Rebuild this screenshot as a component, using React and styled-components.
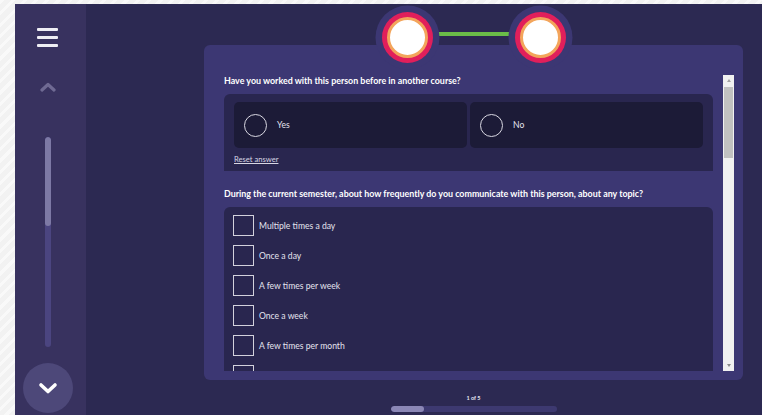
import React from "react";
import styled, { createGlobalStyle } from "styled-components";

const frequencies = [
  "Multiple times a day",
  "Once a day",
  "A few times per week",
  "Once a week",
  "A few times per month",
  "Once a month",
];

const GlobalStyle = createGlobalStyle`
  html, body {
    margin: 0;
    padding: 0;
    height: 100%;
  }
  body {
    background-color: #f2f2f2;
    background-image: repeating-linear-gradient(
      -45deg,
      #f2f2f2 0px,
      #f2f2f2 5px,
      #f9f9f9 5px,
      #f9f9f9 8px
    );
    font-family: Lato, "Open Sans", sans-serif;
    overflow: hidden;
  }
  #root {
    padding: 4px 0 0 15px;
  }
`;

export default function App() {
  return (
    <>
      <GlobalStyle />
      <Shell>
        <Sidebar>
          <Hamburger>
            <span />
            <span />
            <span />
          </Hamburger>
          <ChevronIcon width="16" height="10" viewBox="0 0 16 10">
            <path d="M2 8 L8 2.5 L14 8" />
          </ChevronIcon>
          <Track>
            <TrackThumb />
          </Track>
          <DownButton>
            <svg width="20" height="12" viewBox="0 0 20 12">
              <path
                d="M3 3 L10 9.5 L17 3"
                fill="none"
                stroke="#fff"
                strokeWidth="3.6"
                strokeLinecap="round"
                strokeLinejoin="round"
              />
            </svg>
          </DownButton>
        </Sidebar>

        <Main>
          <Card>
            <Stepper>
              <Step />
              <Link />
              <Step />
            </Stepper>

            <ScrollArea>
              <Questions>
                <Question>
                  Have you worked with this person before in another course?
                </Question>
                <RadioGroup>
                  <Options>
                    <Option>
                      <Radio />
                      Yes
                    </Option>
                    <Option>
                      <Radio />
                      No
                    </Option>
                  </Options>
                  <Reset>Reset answer</Reset>
                </RadioGroup>

                <Question $gap>
                  During the current semester, about how frequently do you
                  communicate with this person, about any topic?
                </Question>
                <CheckGroup>
                  {frequencies.map((f) => (
                    <CheckRow key={f}>
                      <Check />
                      {f}
                    </CheckRow>
                  ))}
                </CheckGroup>
              </Questions>

              <Scrollbar>
                <ScrollButton>
                  <Arrow />
                </ScrollButton>
                <ScrollTrack>
                  <ScrollThumb />
                </ScrollTrack>
                <ScrollButton>
                  <Arrow $down />
                </ScrollButton>
              </Scrollbar>
            </ScrollArea>
          </Card>

          <Pager>
            <PageLabel>1 of 5</PageLabel>
            <Progress>
              <ProgressFill style={{ width: `${(1 / 5) * 100}%` }} />
            </Progress>
          </Pager>
        </Main>
      </Shell>
    </>
  );
}

const Shell = styled.div`
  display: flex;
  height: 411px;
  background: #2c2952;
`;

const Sidebar = styled.aside`
  width: 65px;
  padding-right: 6px;
  background: #38325f;
  display: flex;
  flex-direction: column;
  align-items: center;
`;

const Hamburger = styled.div`
  margin-top: 24px;
  width: 21px;
  display: flex;
  flex-direction: column;
  gap: 5px;

  span {
    display: block;
    height: 3px;
    border-radius: 1px;
    background: #eeeef4;
  }
`;

const ChevronIcon = styled.svg`
  margin-top: 35px;
  fill: none;
  stroke: #6f6a93;
  stroke-width: 3.2;
  stroke-linecap: round;
  stroke-linejoin: round;
`;

const Track = styled.div`
  margin-top: 45px;
  width: 6px;
  height: 210px;
  border-radius: 3px;
  background: #4b4580;
  overflow: hidden;
`;

const TrackThumb = styled.div`
  height: 89px;
  border-radius: 3px;
  background: #7d79a5;
`;

const DownButton = styled.div`
  margin-top: auto;
  margin-bottom: 2px;
  width: 50px;
  height: 50px;
  border-radius: 50%;
  background: #4d4879;
  display: flex;
  align-items: center;
  justify-content: center;
`;

const Main = styled.main`
  flex: 1;
  padding: 41px 19px 0 118px;
  display: flex;
  flex-direction: column;
`;

const Card = styled.section`
  position: relative;
  height: 335px;
  box-sizing: border-box;
  padding: 30px 9px 9px 20px;
  border-radius: 6px;
  background: #3c3773;
  display: flex;
`;

const Stepper = styled.div`
  position: absolute;
  top: -33px;
  left: 0;
  right: 0;
  display: flex;
  justify-content: center;
  align-items: flex-start;
`;

const Step = styled.div`
  width: 51px;
  height: 51px;
  border-radius: 50%;
  background: #e11f5b;
  box-shadow: 0 0 0 6.5px #3c3773;
  display: flex;
  align-items: center;
  justify-content: center;
  position: relative;
  z-index: 1;

  &::after {
    content: "";
    width: 35px;
    height: 35px;
    border-radius: 50%;
    background: #fff;
    border: 3px solid #f3a55b;
  }
`;

const Link = styled.div`
  width: 82px;
  height: 4px;
  margin-top: 20px;
  background: #6abd48;
`;

const ScrollArea = styled.div`
  flex: 1;
  display: flex;
  gap: 10px;
  overflow: hidden;
`;

const Questions = styled.div`
  flex: 1;
  overflow: hidden;
`;

const Question = styled.p`
  margin: ${(p) => (p.$gap ? "17px" : "0")} 0 7px;
  font-size: 8.9px;
  line-height: 12px;
  font-weight: 700;
  color: #ffffff;
  white-space: nowrap;
`;

const RadioGroup = styled.div`
  background: #29264f;
  border-radius: 6px 6px 0 0;
  padding: 8px 10px 6px;
`;

const Options = styled.div`
  display: flex;
  gap: 3px;
`;

const Option = styled.div`
  flex: 1;
  height: 46px;
  border-radius: 5px;
  background: #1c1b37;
  display: flex;
  align-items: center;
  gap: 10px;
  padding-left: 10px;
  font-size: 8.6px;
  color: #e4e3ee;
`;

const Radio = styled.span`
  flex-shrink: 0;
  box-sizing: border-box;
  width: 23px;
  height: 23px;
  border-radius: 50%;
  border: 1.5px solid #d9d8e2;
`;

const Reset = styled.div`
  margin-top: 5px;
  font-size: 7.6px;
  line-height: 12px;
  color: #d8d7e4;
  text-decoration: underline;
`;

const CheckGroup = styled.div`
  background: #29264f;
  border-radius: 6px 6px 0 0;
  padding: 8px 9px;
  display: flex;
  flex-direction: column;
  gap: 9px;
`;

const CheckRow = styled.div`
  flex-shrink: 0;
  height: 21px;
  display: flex;
  align-items: center;
  gap: 5px;
  font-size: 8.6px;
  color: #e4e3ee;
`;

const Check = styled.span`
  flex-shrink: 0;
  box-sizing: border-box;
  width: 21px;
  height: 21px;
  border: 1.5px solid #d2d1dc;
`;

const Scrollbar = styled.div`
  flex-shrink: 0;
  width: 11px;
  display: flex;
  flex-direction: column;
  background: #f1f1f1;
`;

const ScrollButton = styled.div`
  height: 11px;
  display: flex;
  align-items: center;
  justify-content: center;
`;

const Arrow = styled.span`
  width: 0;
  height: 0;
  border-left: 2.5px solid transparent;
  border-right: 2.5px solid transparent;
  ${(p) =>
    p.$down
      ? "border-top: 3px solid #8a8a8a;"
      : "border-bottom: 3px solid #a3a3a3;"}
`;

const ScrollTrack = styled.div`
  flex: 1;
  padding: 1px 1px 0;
`;

const ScrollThumb = styled.div`
  height: 71px;
  background: #c1c1c1;
`;

const Pager = styled.div`
  display: flex;
  flex-direction: column;
  align-items: center;
  padding-top: 15px;
`;

const PageLabel = styled.div`
  font-size: 5.5px;
  font-weight: 700;
  color: #e8e7f2;
  line-height: 6px;
`;

const Progress = styled.div`
  margin-top: 5px;
  width: 166px;
  height: 6px;
  border-radius: 3px;
  background: #3d3970;
  overflow: hidden;
`;

const ProgressFill = styled.div`
  height: 100%;
  border-radius: 3px;
  background: #8b87b6;
`;
